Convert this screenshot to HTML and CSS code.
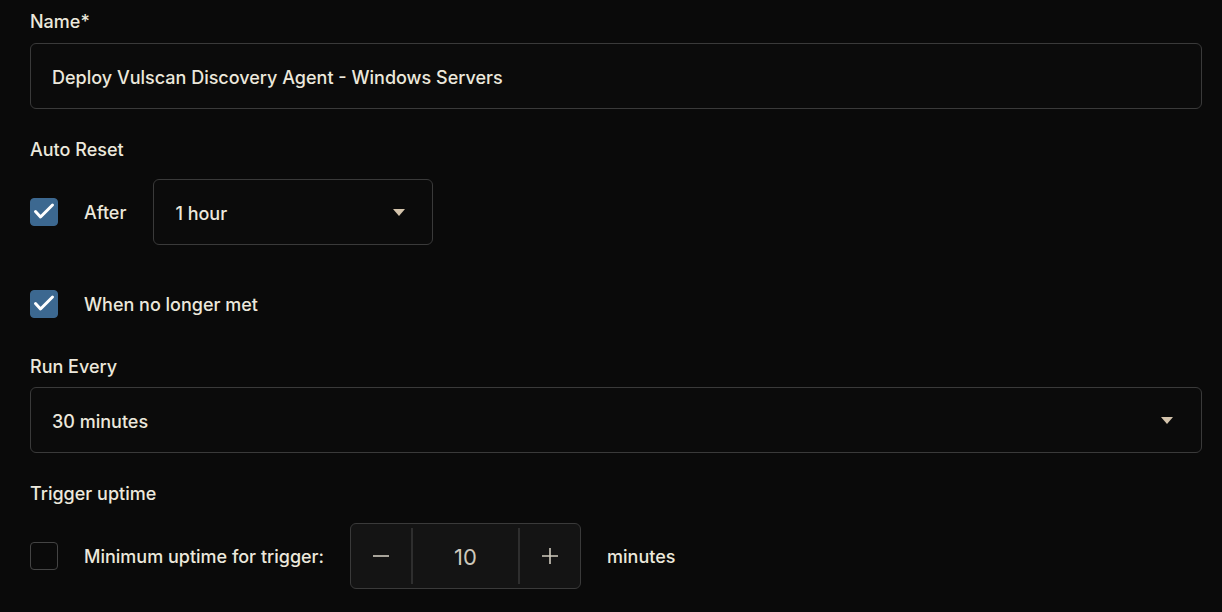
FILE: index.html
```html
<!DOCTYPE html>
<html lang="en">
<head>
<meta charset="utf-8">
<title>Trigger settings</title>
<link rel="stylesheet" href="styles.css">
</head>
<body>
<form class="form">
  <div class="field">
    <label class="label">Name*</label>
    <div class="input">Deploy Vulscan Discovery Agent - Windows Servers</div>
  </div>

  <div class="field field-reset">
    <div class="label">Auto Reset</div>
    <div class="row">
      <span class="checkbox checked"><svg viewBox="0 0 28 28" width="28" height="28"><path d="M5.5 13.5l5 5.5L22.5 7" fill="none" stroke="#fff" stroke-width="3" stroke-linecap="round" stroke-linejoin="round"/></svg></span>
      <span class="text">After</span>
      <div class="select small"><span>1 hour</span><span class="caret"></span></div>
    </div>
    <div class="row row-second">
      <span class="checkbox checked"><svg viewBox="0 0 28 28" width="28" height="28"><path d="M5.5 13.5l5 5.5L22.5 7" fill="none" stroke="#fff" stroke-width="3" stroke-linecap="round" stroke-linejoin="round"/></svg></span>
      <span class="text">When no longer met</span>
    </div>
  </div>

  <div class="field field-run">
    <div class="label">Run Every</div>
    <div class="select"><span>30 minutes</span><span class="caret"></span></div>
  </div>

  <div class="field field-uptime">
    <div class="label">Trigger uptime</div>
    <div class="row">
      <span class="checkbox"></span>
      <span class="text">Minimum uptime for trigger:</span>
      <div class="stepper">
        <span class="step"><svg width="18" height="18" viewBox="0 0 18 18"><path d="M1 9h16" stroke="#cfcabd" stroke-width="1.6"/></svg></span>
        <span class="value">10</span>
        <span class="step"><svg width="18" height="18" viewBox="0 0 18 18"><path d="M1 9h16M9 1v16" stroke="#cfcabd" stroke-width="1.6"/></svg></span>
      </div>
      <span class="text">minutes</span>
    </div>
  </div>
</form>
</body>
</html>
```
FILE: styles.css
```css
html, body {
  margin: 0;
  background: #0a0a0a;
}
body {
  font-family: Inter, "Noto Sans", sans-serif;
  color: #ece8dc;
  font-size: 18px;
}
.form {
  padding: 10px 20px 0 30px;
}
.field {
  margin-bottom: 29px;
}
.field-reset {
  margin-bottom: 37px;
}
.label {
  display: block;
  line-height: 24px;
  height: 24px;
  margin-bottom: 9px;
  font-weight: 500;
}
.field-reset .label,
.field-uptime .label {
  margin-bottom: 17px;
}
.field-run .label {
  margin-bottom: 8px;
}
.input, .select {
  box-sizing: border-box;
  height: 66px;
  border: 1px solid #3a3a3a;
  border-radius: 6px;
  display: flex;
  align-items: center;
  padding: 2px 20px 0 21px;
  background: #0b0b0b;
  font-weight: 500;
}
.select {
  justify-content: space-between;
  padding-right: 28px;
}
.select.small {
  width: 280px;
  padding-right: 27px;
  margin-left: 1px;
}
.caret {
  width: 0;
  height: 0;
  border-left: 6px solid transparent;
  border-right: 6px solid transparent;
  border-top: 7px solid #d4c4ac;
  margin-top: -2px;
}
.row {
  display: flex;
  align-items: center;
  gap: 26px;
}
.row-second {
  margin-top: 45px;
}
.checkbox {
  box-sizing: border-box;
  width: 28px;
  height: 28px;
  border-radius: 4px;
  border: 1px solid #444;
  flex: none;
  display: flex;
}
.checkbox.checked {
  background: #3c6890;
  border-color: #3c6890;
}
.checkbox svg {
  margin: -1px;
}
.text {
  font-weight: 500;
  line-height: 24px;
  padding-top: 2px;
}
.stepper {
  box-sizing: border-box;
  width: 231px;
  height: 66px;
  border: 1px solid #3a3a3a;
  border-radius: 6px;
  background: #141414;
  display: flex;
  align-items: stretch;
  padding: 4px 0;
}
.step {
  width: 60px;
  display: flex;
  align-items: center;
  justify-content: center;
}
.value {
  flex: 1;
  display: flex;
  align-items: center;
  justify-content: center;
  border-left: 2px solid #2e2e2e;
  border-right: 2px solid #2e2e2e;
  font-size: 22px;
  color: #cdc8bb;
  margin: 0;
  padding-top: 2px;
}
```
